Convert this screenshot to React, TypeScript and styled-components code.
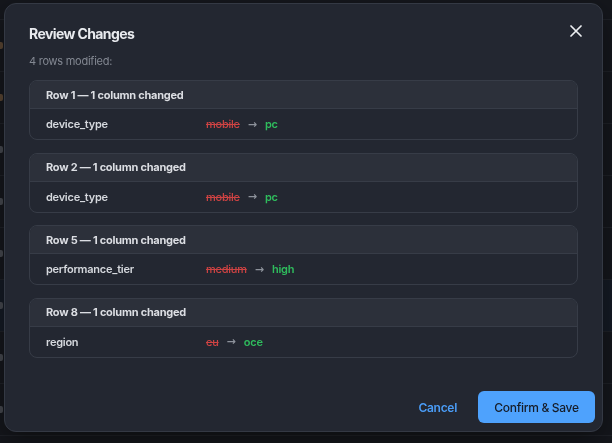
import React from 'react';
import styled, { createGlobalStyle } from 'styled-components';

const GlobalStyle = createGlobalStyle`
  html, body {
    margin: 0;
    padding: 0;
    background: #1b1e24;
    font-family: Inter, "Noto Sans", "Liberation Sans", sans-serif;
    overflow: hidden;
  }
`;

// --- table behind the dialog ---

const Page = styled.div`
  width: 612px;
  height: 443px;
  background: #1d2027;
`;

const TableHead = styled.div`
  display: grid;
  grid-template-columns: 50px repeat(6, 94px);
  height: 19px;
  border-bottom: 1px solid #2c3038;
  align-items: end;
`;

const HeadCell = styled.div`
  display: flex;
  align-items: center;
  gap: 8px;
  padding-left: 6px;
  font-size: 9px;
  font-weight: 600;
  letter-spacing: 0.5px;
  color: #6f747d;
  line-height: 12px;
  transform: translateY(-4px);

  &::before {
    content: '·';
    color: #5a5f67;
  }
`;

const TableRow = styled.div<{ $selected?: boolean }>`
  display: flex;
  align-items: center;
  height: 51px;
  border-bottom: 1px solid #2c3038;
  background: ${(p) => (p.$selected ? '#1d2634' : 'transparent')};
`;

const RowMark = styled.span<{ $tone: 'warm' | 'cool' }>`
  width: 5px;
  height: 7px;
  margin-left: -2px;
  border-radius: 2px;
  background: ${(p) => (p.$tone === 'warm' ? '#8a6a4a' : '#6a6e76')};
`;

const Shade = styled.div`
  position: fixed;
  inset: 0;
  background: rgba(8, 9, 12, 0.35);
`;

// --- dialog ---

const Dialog = styled.div`
  position: fixed;
  left: 4px;
  top: 3px;
  width: 599px;
  height: 429px;
  box-sizing: border-box;
  display: flex;
  flex-direction: column;
  background: #232731;
  border: 1px solid #343944;
  border-radius: 12px;
  box-shadow: 0 10px 30px rgba(0, 0, 0, 0.45);
  letter-spacing: -0.25px;
`;

const DialogHeader = styled.div`
  display: flex;
  justify-content: space-between;
  align-items: flex-start;
  padding: 20px 20px 0 24px;
`;

const Title = styled.h2`
  margin: 0;
  font-size: 14px;
  line-height: 20px;
  font-weight: 700;
  letter-spacing: -0.6px;
  color: #e8eaee;
`;

const CloseButton = styled.button`
  display: flex;
  align-items: center;
  justify-content: center;
  width: 12px;
  height: 12px;
  margin-top: 1px;
  padding: 0;
  border: none;
  background: none;
  cursor: pointer;
`;

const Body = styled.div`
  padding: 9px 24px 0 24px;
`;

const Summary = styled.div`
  font-size: 11px;
  line-height: 16px;
  color: #838892;
  margin-bottom: 11px;
`;

const ChangeList = styled.div`
  display: flex;
  flex-direction: column;
  gap: 12.67px;
`;

const Card = styled.div`
  border: 1px solid #373c47;
  border-radius: 8px;
  overflow: hidden;
`;

const CardHeader = styled.div`
  height: 27px;
  display: flex;
  align-items: center;
  padding: 0 16px;
  background: #2c303a;
  border-bottom: 1px solid #373c47;
  font-size: 11px;
  font-weight: 700;
  color: #dcdee3;
`;

const FieldRow = styled.div`
  display: grid;
  grid-template-columns: 160px 1fr;
  align-items: center;
  height: 30px;
  padding: 0 16px;
  font-size: 11px;
  font-weight: 600;
`;

const FieldName = styled.span`
  color: #d6d9de;
`;

const Values = styled.span`
  display: flex;
  align-items: center;
`;

const OldValue = styled.span`
  color: #cf4343;
  text-decoration: line-through;
  font-weight: 500;
`;

const Arrow = styled.span`
  color: #8d929b;
  margin: 0 8px;
  font-family: "DejaVu Sans", sans-serif;
  font-size: 11px;
  letter-spacing: 0;
`;

const NewValue = styled.span`
  color: #2fbd5d;
`;

const Footer = styled.div`
  margin-top: auto;
  display: flex;
  justify-content: flex-end;
  align-items: center;
  gap: 6px;
  padding: 0 7px 8px 0;
`;

const TextButton = styled.button`
  border: none;
  background: none;
  padding: 0 15px;
  height: 32px;
  font-family: inherit;
  font-size: 12px;
  font-weight: 600;
  letter-spacing: -0.3px;
  color: #4a9cf6;
  cursor: pointer;
`;

const PrimaryButton = styled.button`
  border: none;
  height: 32px;
  width: 117px;
  border-radius: 6px;
  background: #4ea2fd;
  font-family: inherit;
  font-size: 12px;
  font-weight: 500;
  letter-spacing: -0.3px;
  color: #161c27;
  cursor: pointer;
`;

type Change = {
  row: number;
  field: string;
  from: string;
  to: string;
};

const changes: Change[] = [
  { row: 1, field: 'device_type', from: 'mobile', to: 'pc' },
  { row: 2, field: 'device_type', from: 'mobile', to: 'pc' },
  { row: 5, field: 'performance_tier', from: 'medium', to: 'high' },
  { row: 8, field: 'region', from: 'eu', to: 'oce' },
];

const CloseIcon = () => (
  <svg width="12" height="12" viewBox="0 0 12 12" fill="none">
    <path d="M1 1L11 11M11 1L1 11" stroke="#eceef1" strokeWidth="1.7" strokeLinecap="round" />
  </svg>
);

export default function App() {
  return (
    <>
      <GlobalStyle />
      <Page>
        <TableHead>
          <span />
          {[0, 1, 2, 3, 4, 5].map((i) => (
            <HeadCell key={i}>STRING</HeadCell>
          ))}
        </TableHead>
        {[0, 1, 2, 3, 4, 5, 6, 7].map((i) => (
          <TableRow key={i} $selected={i === 5}>
            <RowMark $tone={i < 2 ? 'warm' : 'cool'} />
          </TableRow>
        ))}
      </Page>
      <Shade />
      <Dialog role="dialog">
        <DialogHeader>
          <Title>Review Changes</Title>
          <CloseButton aria-label="Close">
            <CloseIcon />
          </CloseButton>
        </DialogHeader>
        <Body>
          <Summary>{changes.length} rows modified:</Summary>
          <ChangeList>
            {changes.map((c) => (
              <Card key={c.row}>
                <CardHeader>Row {c.row} — 1 column changed</CardHeader>
                <FieldRow>
                  <FieldName>{c.field}</FieldName>
                  <Values>
                    <OldValue>{c.from}</OldValue>
                    <Arrow>→</Arrow>
                    <NewValue>{c.to}</NewValue>
                  </Values>
                </FieldRow>
              </Card>
            ))}
          </ChangeList>
        </Body>
        <Footer>
          <TextButton>Cancel</TextButton>
          <PrimaryButton>Confirm &amp; Save</PrimaryButton>
        </Footer>
      </Dialog>
    </>
  );
}
